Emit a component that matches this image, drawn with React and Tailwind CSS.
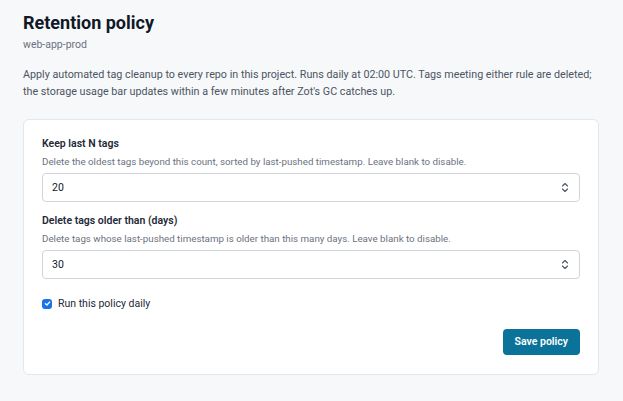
import React from 'react';

const Chevrons = () => (
  <svg width="8" height="11" viewBox="0 0 8 11" fill="none" stroke="#4b5563" strokeWidth="1.1" strokeLinecap="round" strokeLinejoin="round">
    <path d="M1.5 4 L4 1.5 L6.5 4" />
    <path d="M1.5 7 L4 9.5 L6.5 7" />
  </svg>
);

const Field = ({ label, help, value }) => (
  <div>
    <div className="text-[10.5px] font-semibold text-[#1f2937] leading-[15px]">{label}</div>
    <div className="text-[9.75px] text-[#6b7280] leading-[12px] mt-[5px]">{help}</div>
    <div className="mt-[5px] h-[29px] border border-[#d1d5db] rounded-[4px] bg-white flex items-center justify-between pl-[9px] pr-[10px]">
      <span className="text-[10.5px] text-[#111827]">{value}</span>
      <Chevrons />
    </div>
  </div>
);

export default function App() {
  return (
    <div className="min-h-screen bg-[#f7f8fa] px-[23px] pt-[11px] pb-[26px]" style={{ fontFamily: 'Roboto, "Noto Sans", sans-serif' }}>
      <h1 className="text-[18px] font-bold text-[#111827] leading-[24px]">Retention policy</h1>
      <div className="text-[10.5px] text-[#6b7280] mt-[3px] leading-[14px]">web-app-prod</div>
      <p className="text-[10.75px] text-[#4b5563] leading-[17px] mt-[14px] w-[576px]">
        Apply automated tag cleanup to every repo in this project. Runs daily at 02:00 UTC. Tags meeting either rule are deleted; the storage usage bar updates within a few minutes after Zot's GC catches up.
      </p>
      <div className="mt-[19px] w-[576px] bg-white border border-[#e5e7eb] rounded-[6px] px-[18px] pt-[16px] pb-[19px]">
        <Field
          label="Keep last N tags"
          help="Delete the oldest tags beyond this count, sorted by last-pushed timestamp. Leave blank to disable."
          value="20"
        />
        <div className="mt-[11px]">
          <Field
            label="Delete tags older than (days)"
            help="Delete tags whose last-pushed timestamp is older than this many days. Leave blank to disable."
            value="30"
          />
        </div>
        <label className="flex items-center gap-[6px] mt-[17px] leading-[15px]">
          <span className="w-[10px] h-[10px] rounded-[3px] bg-[#1a73e8] flex items-center justify-center">
            <svg width="7" height="7" viewBox="0 0 8 8" fill="none" stroke="white" strokeWidth="1.6" strokeLinecap="round" strokeLinejoin="round">
              <path d="M1.6 4.2 L3.3 5.8 L6.4 2.4" />
            </svg>
          </span>
          <span className="text-[10.5px] text-[#1f2937]">Run this policy daily</span>
        </label>
        <div className="flex justify-end mt-[18px]">
          <button className="h-[26px] px-[12px] rounded-[4px] bg-[#0b7399] text-white text-[10.5px] font-semibold">Save policy</button>
        </div>
      </div>
    </div>
  );
}
